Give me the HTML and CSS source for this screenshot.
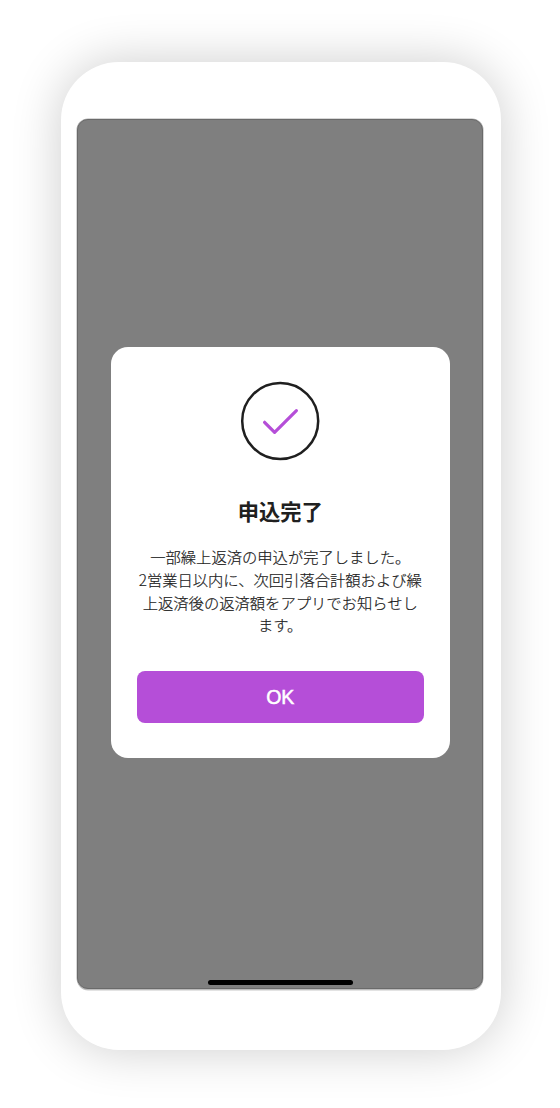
FILE: index.html
```html
<!DOCTYPE html>
<html lang="ja">
<head>
<meta charset="utf-8">
<title>申込完了</title>
<link rel="stylesheet" href="styles.css">
</head>
<body>
<main class="phone">
  <div class="screen">
    <section class="dialog" role="dialog" aria-labelledby="title">
      <svg class="check" viewBox="0 0 80 80" aria-hidden="true">
        <circle cx="40.2" cy="40" r="38" fill="none" stroke="#1f1f1f" stroke-width="2.5"/>
        <path d="M24.6 41.3 34.6 51.3 56.4 29.7" fill="none" stroke="#b54ed8" stroke-width="3.2" stroke-linecap="round" stroke-linejoin="round"/>
      </svg>
      <h1 class="title" id="title">申込完了</h1>
      <p class="message">一部繰上返済の申込が完了しました。<br>2営業日以内に、次回引落合計額および繰<br>上返済後の返済額をアプリでお知らせし<br>ます。</p>
      <button class="ok" type="button">OK</button>
    </section>
    <div class="home-bar"></div>
  </div>
</main>
</body>
</html>
```
FILE: styles.css
```css
* { box-sizing: border-box; }
body {
  margin: 0;
  padding: 62px 59px 58px 61px;
  height: 1108px;
  background: #fff;
  color: #202020;
  font-family: "Liberation Sans", "Noto Sans CJK JP", sans-serif;
  overflow: hidden;
}
.phone {
  height: 988px;
  padding: 57px 18px 61px 16px;
  background: #fff;
  border-radius: 58px;
  box-shadow: 0 0 50px rgba(0, 0, 0, .2);
}
.screen {
  height: 870px;
  padding: 227px 32px 3px 32.5px;
  display: flex;
  flex-direction: column;
  justify-content: space-between;
  align-items: center;
  background: #7f7f7f;
  border: 1px solid #6a6a6a;
  border-radius: 11px;
  box-shadow: 0 0 0 .5px #b0b0b0, 0 1.5px 0 #c8c8c8;
}
.dialog {
  width: 339.5px;
  height: 411px;
  padding: 34px 26.5px 35px;
  display: flex;
  flex-direction: column;
  align-items: center;
  background: #fff;
  border-radius: 17px;
}
.check { width: 80px; height: 80px; flex: none; }
.title {
  margin: 34px 0 0;
  font-family: "Noto Sans CJK JP", sans-serif;
  font-size: 21.3px;
  line-height: 32px;
  font-weight: 700;
}
.message {
  margin: 18px 0 0;
  font-family: "Noto Sans CJK JP", sans-serif;
  font-size: 15.3px;
  line-height: 22.8px;
  font-weight: 300;
  -webkit-text-stroke: .2px #202020;
  text-align: center;
  white-space: nowrap;
}
.ok {
  width: 100%;
  height: 52px;
  margin-top: auto;
  padding: 0;
  border: 0;
  border-radius: 8px;
  background: #b54ed8;
  color: #fff;
  font: 400 19.5px/52px "Liberation Sans", sans-serif;
  -webkit-text-stroke: .5px #fff;
}
.home-bar {
  width: 145px;
  height: 5px;
  border-radius: 3px;
  background: #000;
}
```
